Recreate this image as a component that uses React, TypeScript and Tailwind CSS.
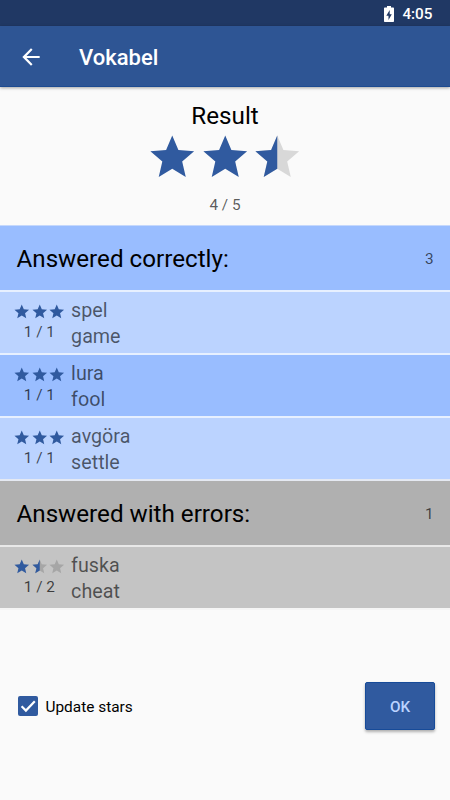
type Fill = 0 | 0.5 | 1;

const STAR =
  "M12 17.27L18.18 21l-1.64-7.03L22 9.24l-7.19-.61L12 2 9.19 8.63 2 9.24l5.46 4.73L5.82 21z";
const HALF_STAR = "M12 17.27L5.82 21l1.64-7.03L2 9.24l7.19-.61L12 2z";

function Star({ fill, className, empty }: { fill: Fill; className: string; empty: string }) {
  return (
    <svg viewBox="0 0 24 24" className={className}>
      {fill < 1 && <path d={STAR} fill={empty} />}
      {fill > 0 && <path d={fill === 1 ? STAR : HALF_STAR} fill="#305a9f" />}
    </svg>
  );
}

function SectionHeader({ title, count, tone }: { title: string; count: number; tone: string }) {
  return (
    <div className={`flex h-[66px] items-center justify-between border-b-2 pl-[16.5px] pr-[16.5px] pt-[2px] ${tone}`}>
      <h2 className="text-[24.2px] leading-7 text-black">{title}</h2>
      <span className="pb-[1px] text-[15.3px] leading-5 text-black/65">{count}</span>
    </div>
  );
}

interface Word {
  term: string;
  translation: string;
  score: string;
  stars: Fill[];
}

function WordRow({ word, tone }: { word: Word; tone: string }) {
  return (
    <div className={`flex h-[63px] border-b-2 pl-[13.3px] ${tone}`}>
      <div className="w-[52.5px] pt-[11px]">
        <div className="flex">
          {word.stars.map((s, i) => (
            <Star key={i} fill={s} className="size-[17.5px]" empty="#a6a6a6" />
          ))}
        </div>
        <div className="pl-[10.5px] text-[15.3px] leading-[22px] whitespace-nowrap text-black/70">{word.score}</div>
      </div>
      <div className="pl-[5.3px] pt-[6px] text-[19.7px] leading-[26px] text-black/60">
        <div>{word.term}</div>
        <div>{word.translation}</div>
      </div>
    </div>
  );
}

const correct: Word[] = [
  { term: "spel", translation: "game", score: "1 / 1", stars: [1, 1, 1] },
  { term: "lura", translation: "fool", score: "1 / 1", stars: [1, 1, 1] },
  { term: "avgöra", translation: "settle", score: "1 / 1", stars: [1, 1, 1] },
];

const rowTones = [
  "bg-[#bbd3ff] border-[#e7f0ff]",
  "bg-[#99bdff] border-[#e7f0ff]",
  "bg-[#bbd3ff] border-[#e5e9f2]",
];

export default function App() {
  return (
    <div className="flex h-[800px] w-[450px] flex-col overflow-hidden bg-[#fafafa] font-['Roboto',sans-serif]">
      <div className="flex h-[26px] shrink-0 items-center justify-end bg-[#203864] pr-[17.5px] pt-[2px] text-white">
        <svg viewBox="0 0 10 16" className="mr-[8px] h-[16px] w-[10px]">
          <path d="M3 0h4v1.6h2c.6 0 1 .4 1 1V15c0 .6-.4 1-1 1H1c-.6 0-1-.4-1-1V2.6c0-.6.4-1 1-1h2z" fill="white" />
          <path d="M5.7 4L2.3 9.8h2.2V14l3.3-5.7H5.7z" fill="#203864" />
        </svg>
        <span className="text-[15.3px] leading-5 font-medium">4:05</span>
      </div>
      <header className="z-10 flex h-[61px] shrink-0 items-center border-b border-[#1d4b91] bg-[#2e5594] pl-[17.5px] text-white shadow-[0_1px_3px_rgba(0,0,0,0.35)]">
        <svg viewBox="0 0 24 24" className="mt-[1px] size-[26px]">
          <path d="M20 11H7.83l5.59-5.59L12 4l-8 8 8 8 1.41-1.41L7.83 13H20v-2z" fill="white" />
        </svg>
        <h1 className="pl-[35.5px] pt-[4px] text-[22px] leading-7 font-medium">Vokabel</h1>
      </header>
      <section className="flex h-[139px] shrink-0 flex-col items-center border-b border-[#c5d8fc] pt-[15px]">
        <h2 className="text-[24.2px] leading-7 text-black">Result</h2>
        <div className="mt-[1px] flex">
          <Star fill={1} className="size-[52.5px]" empty="#d8d8d8" />
          <Star fill={1} className="size-[52.5px]" empty="#d8d8d8" />
          <Star fill={0.5} className="size-[52.5px]" empty="#d8d8d8" />
        </div>
        <div className="mt-[11.5px] text-[15.3px] leading-5 text-black/65">4 / 5</div>
      </section>
      <SectionHeader title="Answered correctly:" count={3} tone="bg-[#99bdff] border-[#e7f0ff]" />
      {correct.map((w, i) => (
        <WordRow key={w.term} word={w} tone={rowTones[i]} />
      ))}
      <SectionHeader title="Answered with errors:" count={1} tone="bg-[#b0b0b0] border-[#e8e8e8]" />
      <WordRow
        word={{ term: "fuska", translation: "cheat", score: "1 / 2", stars: [1, 0.5, 0] }}
        tone="bg-[#c4c4c4] border-[#f5f5f5]"
      />
      <footer className="mt-[72px] flex h-[48px] items-center justify-between pl-[18px] pr-[15px]">
        <label className="flex items-center">
          <svg viewBox="0 0 20 20" className="size-[20px]">
            <rect width="20" height="20" rx="2" fill="#305a9f" />
            <path d="M3.6 10.3l4.3 4.3 8.9-9.3" fill="none" stroke="white" strokeWidth="2.2" />
          </svg>
          <span className="pl-[7.5px] pt-[1px] text-[15.4px] leading-5 text-black">Update stars</span>
        </label>
        <button className="h-[48px] w-[70px] rounded-[2px] border border-[#174b99] bg-[#305a9f] pt-[2px] text-[15.3px] font-medium text-[#bbd3ff] shadow-[0_2px_3px_rgba(0,0,0,0.3)]">
          OK
        </button>
      </footer>
    </div>
  );
}
